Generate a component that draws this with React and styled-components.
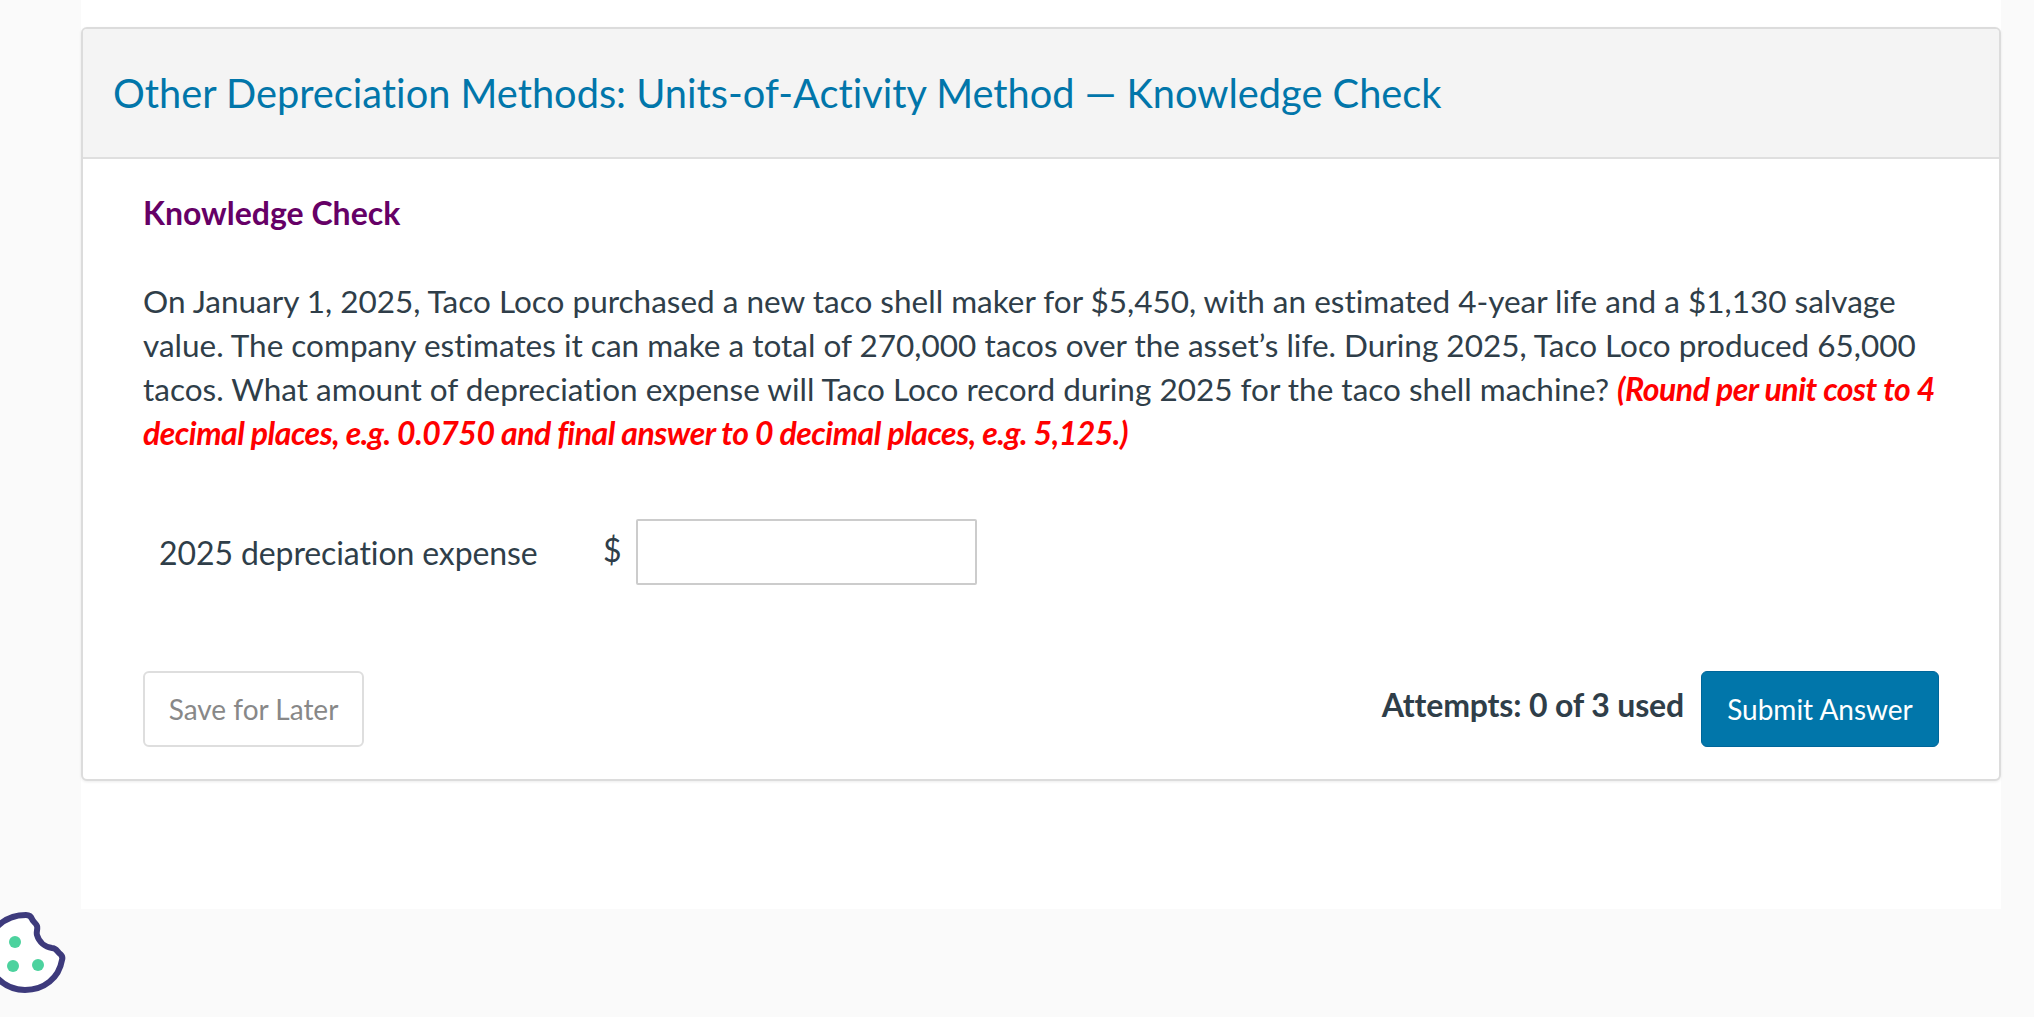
import styled, { createGlobalStyle } from "styled-components";

const GlobalStyle = createGlobalStyle`
  html, body {
    margin: 0;
    padding: 0;
    background: #fafafa;
    font-family: Lato, "Liberation Sans", sans-serif;
    font-variant-ligatures: none;
    color: #2d3b45;
  }
  * {
    box-sizing: border-box;
  }
`;

const Page = styled.div`
  height: 1017px;
  padding-left: 81px;
  padding-right: 33px;
  overflow: hidden;
`;
const Column = styled.main`
  height: 909px;
  padding-top: 27px;
  background: #fff;
`;
const Card = styled.section`
  height: 754px;
  border: 2px solid #dcdcdc;
  border-radius: 6px;
  box-shadow: 0 1px 3px rgba(0, 0, 0, 0.08);
  background: #fff;
`;
const CardHeader = styled.header`
  display: flex;
  align-items: center;
  height: 130px;
  padding: 0 0 2px 30px;
  border-bottom: 2px solid #dfdfdf;
  border-radius: 4px 4px 0 0;
  background: #f4f4f4;
`;
const Title = styled.h1`
  margin: 0;
  font-size: 39.75px;
  font-weight: 400;
  color: #0176aa;
`;
const CardBody = styled.div`
  padding: 34px 60px 0 60px;
`;
const Eyebrow = styled.h2`
  margin: 0;
  font-size: 32px;
  line-height: 40px;
  font-weight: 700;
  color: #660066;
`;
const Question = styled.p`
  margin: 46px 0 0;
  font-size: 31.5px;
  line-height: 44px;
  color: #2f3e49;
`;
const Hint = styled.em`
  font-size: 32px;
  font-weight: 700;
  font-variant-ligatures: normal;
  letter-spacing: -0.5px;
  color: #ff0000;
`;
const AnswerRow = styled.div`
  display: flex;
  align-items: center;
  margin-top: 64px;
  padding-left: 16px;
`;
const AnswerLabel = styled.label`
  width: 444px;
  font-size: 32px;
  letter-spacing: -0.1px;
  color: #2f3e49;
`;
const Currency = styled.span`
  width: 33px;
  margin-top: -6px;
  font-size: 32px;
  color: #2f3e49;
`;
const AmountInput = styled.input`
  width: 341px;
  height: 66px;
  border: 2px solid #cccccc;
  border-radius: 2px;
  background: #fff;
`;
const Footer = styled.div`
  display: flex;
  align-items: center;
  justify-content: space-between;
  margin-top: 86px;
`;
const SaveButton = styled.button`
  width: 221px;
  height: 76px;
  border: 2px solid #dedede;
  border-radius: 6px;
  background: #fff;
  font-family: inherit;
  font-size: 28px;
  color: #888888;
`;
const SubmitGroup = styled.div`
  display: flex;
  align-items: center;
  gap: 17px;
`;
const Attempts = styled.span`
  margin-top: -9px;
  font-size: 32px;
  font-weight: 700;
  letter-spacing: -0.15px;
  color: #2f3e49;
`;
const SubmitButton = styled.button`
  width: 238px;
  height: 76px;
  border: 1px solid #00669a;
  border-radius: 6px;
  background: #0176aa;
  font-family: inherit;
  font-size: 28px;
  color: #fff;
`;
const CookieBadge = styled.svg`
  position: fixed;
  left: 0;
  bottom: 24px;
  width: 66px;
  height: 84px;
`;

function CookieIcon() {
  return (
    <CookieBadge viewBox="0 0 66 84">
      <path
        d="M-13 43 C-13 22 4 6 26 6 C29 6 31 7 32 10 C33 13 36 14 37 17 C38 20 36 23 37 26 C39 33 45 38 52 39 C56 39 57 42 59 44 C62 46 63 48 62 51 C59 69 44 81 25 81 C4 81 -13 64 -13 43 Z"
        fill="#fff"
        stroke="#3d3a7c"
        strokeWidth="6"
        strokeLinejoin="round"
      />
      <circle cx="15" cy="33" r="6" fill="#4cd29e" />
      <circle cx="13" cy="57" r="6" fill="#4cd29e" />
      <circle cx="38" cy="56" r="6" fill="#4cd29e" />
    </CookieBadge>
  );
}

export default function App() {
  return (
    <Page>
      <GlobalStyle />
      <Column>
        <Card>
          <CardHeader>
            <Title>Other Depreciation Methods: Units-of-Activity Method — Knowledge Check</Title>
          </CardHeader>
          <CardBody>
            <Eyebrow>Knowledge Check</Eyebrow>
            <Question>
              On January 1, 2025, Taco Loco purchased a new taco shell maker for $5,450, with an estimated 4-year life and a $1,130 salvage value. The company estimates it can make a total of 270,000 tacos over the asset’s life. During 2025, Taco Loco produced 65,000 tacos. What amount of depreciation expense will Taco Loco record during 2025 for the taco shell machine? <Hint>(Round per unit cost to 4 decimal places, e.g. 0.0750 and final answer to 0 decimal places, e.g. 5,125.)</Hint>
            </Question>
            <AnswerRow>
              <AnswerLabel>2025 depreciation expense</AnswerLabel>
              <Currency>$</Currency>
              <AmountInput type="text" />
            </AnswerRow>
            <Footer>
              <SaveButton>Save for Later</SaveButton>
              <SubmitGroup>
                <Attempts>Attempts: 0 of 3 used</Attempts>
                <SubmitButton>Submit Answer</SubmitButton>
              </SubmitGroup>
            </Footer>
          </CardBody>
        </Card>
      </Column>
      <CookieIcon />
    </Page>
  );
}
